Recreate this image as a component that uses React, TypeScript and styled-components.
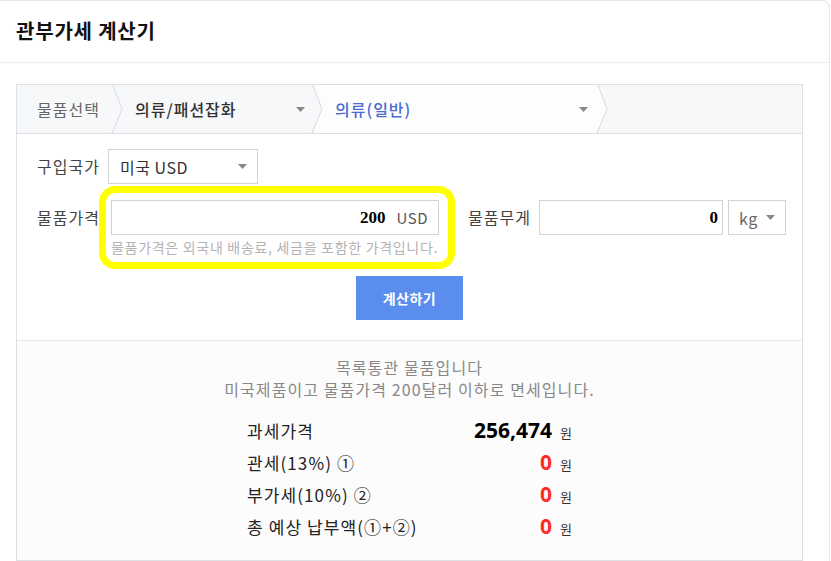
import React from "react";
import styled, { createGlobalStyle } from "styled-components";

const GlobalStyle = createGlobalStyle`
  html, body { margin: 0; padding: 0; background: #fff; overflow: hidden; }
  body { font-family: "Noto Sans CJK KR", "Noto Sans", sans-serif; color: #333; }
  * { box-sizing: border-box; }
`;

const Card = styled.div`
  width: 830px;
  border: 1px solid #e3e5e9;
  border-left: none;
  border-top-right-radius: 8px;
  background: #fff;
`;

const Header = styled.div`
  height: 62px;
  border-bottom: 1px solid #eceef1;
  display: flex;
  align-items: center;
  padding-left: 16px;
`;

const Title = styled.h1`
  margin: 0 0 2px;
  font-size: 20px;
  font-weight: 700;
  color: #111;
  letter-spacing: 0.8px;
`;

const Body = styled.div`
  padding: 21px 26px 30px 16px;
`;

const InnerBox = styled.div`
  border: 1px solid #dcdfe4;
`;

const Breadcrumb = styled.div`
  display: flex;
  height: 49px;
  background: #f7f8fa;
  border-bottom: 1px solid #dcdfe4;
`;

const Crumb = styled.div<{ $w: number; $bg?: string; $pl: number; $pr?: number }>`
  width: ${(p) => p.$w}px;
  padding-left: ${(p) => p.$pl}px;
  padding-right: ${(p) => p.$pr ?? 0}px;
  background: ${(p) => p.$bg ?? "transparent"};
  display: flex;
  align-items: center;
  justify-content: space-between;
  font-size: 16px;
`;

const CrumbText = styled.span<{ $tone: "muted" | "strong" | "active" }>`
  color: ${(p) => (p.$tone === "muted" ? "#666" : p.$tone === "active" ? "#4a6bd3" : "#333")};
  font-weight: ${(p) => (p.$tone === "muted" ? 400 : 500)};
  letter-spacing: 1px;
`;

const ChevronSvg = styled.svg`
  display: block;
  width: 14px;
  height: 48px;
  flex: none;
`;

const Chevron = ({ left, right }: { left: string; right: string }) => (
  <ChevronSvg viewBox="0 0 14 48" preserveAspectRatio="none">
    <rect x="0" y="0" width="14" height="48" fill={right} />
    <polygon points="0,0 3,0 12,24 2,48 0,48" fill={left} />
    <polyline points="3,0 12,24 2,48" fill="none" stroke="#d6d9df" strokeWidth="1" />
  </ChevronSvg>
);

const Caret = () => (
  <svg width="9" height="5" viewBox="0 0 9 5">
    <polygon points="0,0 9,0 4.5,5" fill="#888" />
  </svg>
);

const Form = styled.div`
  padding: 15px 20px 20px 20px;
`;

const FieldRow = styled.div<{ $mt?: number }>`
  display: flex;
  align-items: flex-start;
  margin-top: ${(p) => p.$mt ?? 0}px;
`;

const Label = styled.div<{ $w: number; $ml?: number }>`
  width: ${(p) => p.$w}px;
  margin-left: ${(p) => p.$ml ?? 0}px;
  height: 35px;
  line-height: 35px;
  font-size: 16px;
  letter-spacing: 1px;
  color: #444;
  white-space: nowrap;
  flex: none;
`;

const SelectBox = styled.div<{ $w: number; $pl: number; $pr: number; $ml?: number }>`
  width: ${(p) => p.$w}px;
  margin-left: ${(p) => p.$ml ?? 0}px;
  height: 35px;
  border: 1px solid #d3d3d3;
  background: #fff;
  display: flex;
  align-items: center;
  justify-content: space-between;
  padding: 0 ${(p) => p.$pr}px 0 ${(p) => p.$pl}px;
  font-size: 16px;
  color: #333;
  flex: none;
`;

const SelectValue = styled.span<{ $muted?: boolean }>`
  color: ${(p) => (p.$muted ? "#666" : "#333")};
  letter-spacing: 0.5px;
`;

const PriceWrap = styled.div`
  position: relative;
  width: 328px;
  flex: none;
`;

const InputBox = styled.div<{ $w: number; $pr: number }>`
  width: ${(p) => p.$w}px;
  height: 35px;
  border: 1px solid #d3d3d3;
  background: #fff;
  display: flex;
  align-items: center;
  padding-right: ${(p) => p.$pr}px;
  flex: none;
`;

const NumInput = styled.input`
  flex: 1;
  min-width: 0;
  border: none;
  outline: none;
  background: transparent;
  text-align: right;
  font-family: "Liberation Serif", serif;
  font-weight: 700;
  font-size: 17px;
  color: #000;
  padding: 0;
`;

const InputUnit = styled.span`
  margin-left: 11px;
  font-size: 15px;
  letter-spacing: 0.5px;
  color: #555;
`;

const Helper = styled.div`
  margin-top: 4px;
  line-height: 17px;
  font-size: 14px;
  letter-spacing: 0.7px;
  color: #b3b3b3;
  white-space: nowrap;
`;

const Highlight = styled.div`
  position: absolute;
  left: -12px;
  top: -14px;
  width: 356px;
  height: 83px;
  border: 7px solid #ffff00;
  border-radius: 16px;
  pointer-events: none;
`;

const CalcButton = styled.button`
  display: block;
  margin: 20px auto 0;
  width: 107px;
  height: 44px;
  border: none;
  background: #5b8def;
  color: #fff;
  font-family: inherit;
  font-size: 14px;
  font-weight: 700;
  letter-spacing: 0.5px;
  cursor: pointer;
`;

const Results = styled.div`
  background: #fcfcfc;
  border-top: 1px solid #e3e5e8;
  padding: 15px 0 18px;
`;

const Notice = styled.div`
  text-align: center;
  font-size: 16px;
  line-height: 22px;
  color: #888;
  letter-spacing: 1.1px;
`;

const ResultTable = styled.div`
  width: 325px;
  margin: 14px auto 0;
`;

const ResultRow = styled.div`
  height: 32px;
  display: flex;
  align-items: center;
  justify-content: space-between;
`;

const ResultLabel = styled.span`
  font-size: 17px;
  letter-spacing: 1.1px;
  color: #222;
`;

const ResultValue = styled.span`
  display: flex;
  align-items: baseline;
`;

const Amount = styled.span<{ $red?: boolean }>`
  font-family: "Noto Sans", sans-serif;
  font-weight: 700;
  font-size: 21px;
  color: ${(p) => (p.$red ? "#ff2b2b" : "#000")};
`;

const Won = styled.span`
  margin-left: 8px;
  font-size: 13px;
  color: #333;
`;

const rows = [
  { label: "과세가격", value: "256,474", red: false },
  { label: "관세(13%) ①", value: "0", red: true },
  { label: "부가세(10%) ②", value: "0", red: true },
  { label: "총 예상 납부액(①+②)", value: "0", red: true },
];

export default function App() {
  return (
    <>
      <GlobalStyle />
      <Card>
        <Header>
          <Title>관부가세 계산기</Title>
        </Header>
        <Body>
          <InnerBox>
            <Breadcrumb>
              <Crumb $w={93} $pl={20}>
                <CrumbText $tone="muted">물품선택</CrumbText>
              </Crumb>
              <Chevron left="#f7f8fa" right="#f7f8fa" />
              <Crumb $w={186} $pl={11} $pr={5}>
                <CrumbText $tone="strong">의류/패션잡화</CrumbText>
                <Caret />
              </Crumb>
              <Chevron left="#f7f8fa" right="#fdfdfe" />
              <Crumb $w={271} $pl={11} $pr={7} $bg="#fdfdfe">
                <CrumbText $tone="active">의류(일반)</CrumbText>
                <Caret />
              </Crumb>
              <Chevron left="#fdfdfe" right="#f7f8fa" />
            </Breadcrumb>

            <Form>
              <FieldRow>
                <Label $w={71}>구입국가</Label>
                <SelectBox $w={150} $pl={11} $pr={10}>
                  <SelectValue>미국 USD</SelectValue>
                  <Caret />
                </SelectBox>
              </FieldRow>

              <FieldRow $mt={16}>
                <Label $w={74}>물품가격</Label>
                <PriceWrap>
                  <InputBox $w={328} $pr={10}>
                    <NumInput readOnly value="200" />
                    <InputUnit>USD</InputUnit>
                  </InputBox>
                  <Helper>물품가격은 외국내 배송료, 세금을 포함한 가격입니다.</Helper>
                  <Highlight />
                </PriceWrap>
                <Label $w={71} $ml={29}>물품무게</Label>
                <InputBox $w={184} $pr={4}>
                  <NumInput readOnly value="0" />
                </InputBox>
                <SelectBox $w={58} $pl={10} $pr={10} $ml={5}>
                  <SelectValue $muted>kg</SelectValue>
                  <Caret />
                </SelectBox>
              </FieldRow>

              <CalcButton>계산하기</CalcButton>
            </Form>

            <Results>
              <Notice>목록통관 물품입니다</Notice>
              <Notice>미국제품이고 물품가격 200달러 이하로 면세입니다.</Notice>
              <ResultTable>
                {rows.map((r) => (
                  <ResultRow key={r.label}>
                    <ResultLabel>{r.label}</ResultLabel>
                    <ResultValue>
                      <Amount $red={r.red}>{r.value}</Amount>
                      <Won>원</Won>
                    </ResultValue>
                  </ResultRow>
                ))}
              </ResultTable>
            </Results>
          </InnerBox>
        </Body>
      </Card>
    </>
  );
}
